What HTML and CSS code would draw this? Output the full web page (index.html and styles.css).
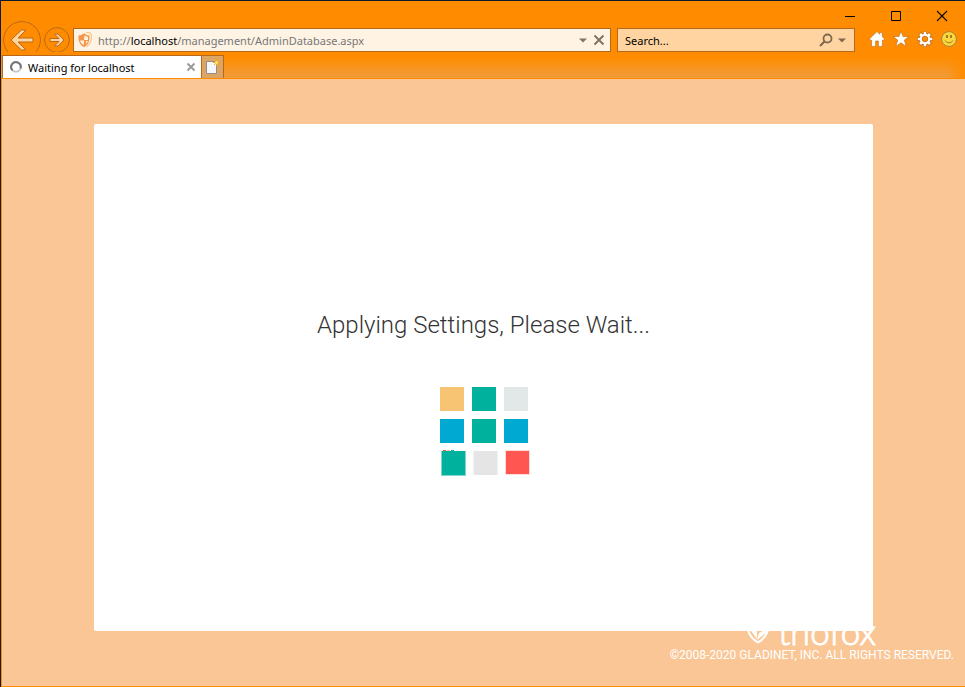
FILE: index.html
```html
<!DOCTYPE html>
<html lang="en">
<head>
<meta charset="utf-8">
<title>Waiting for localhost</title>
<link rel="stylesheet" href="styles.css">
</head>
<body>
<div class="window">
  <header class="chrome">
    <div class="titlebar">
      <button class="win" aria-label="Minimize"><svg width="12" height="12"><path d="M1 6.5h10" stroke="#000"/></svg></button>
      <button class="win" aria-label="Maximize"><svg width="12" height="12"><path d="M1.5 1.5h9v9h-9z" fill="none" stroke="#000"/></svg></button>
      <button class="win" aria-label="Close"><svg width="12" height="12"><path d="M1 1l10 10M11 1L1 11" stroke="#000" stroke-width="1.1"/></svg></button>
    </div>
    <div class="toolbar">
      <button class="nav back" aria-label="Back"><svg width="38" height="38"><circle cx="19" cy="19" r="18.4" fill="#ff8c00" stroke="#b86818"/><path d="M8 19L18.500 9h4.500l-8 8H30v4H15l8 8h-4.500z" fill="#ffd4a0" stroke="#b86818"/></svg></button>
      <button class="nav forward" aria-label="Forward"><svg width="26" height="26"><circle cx="13" cy="13" r="12.400" fill="#ff8c00" stroke="#b86818"/><path d="M20 13l-6-6h-3.500l4.500 4.500H6v3h9L10.500 19H14z" fill="#ffd4a0" stroke="#b86818"/></svg></button>
      <div class="box address">
        <svg width="16" height="16" viewBox="0 0 16 16"><path d="M9 .8c3-.8 5 .2 5.300 2.200.6 5-1.300 9-4.800 11.500" fill="none" stroke="#f9c48f" stroke-width="1.200"/><path d="M1.500 3.500C4 3.500 5.500 2.500 7 1.300c1.600 1.200 3 2 5.500 2.200C13 9 11 13 7 15.200 3 13 1 9 1.500 3.500z" fill="#f5964a"/><path d="M7.500 3.500l3.500 1.500v3H7zM3 8.500h4V13C5 12 3.500 10.500 3 8.500zM9 9h2l-2 3z" fill="#fff3e4"/></svg>
        <a class="url" href="#">http://<b>localhost</b>/management/AdminDatabase.aspx</a>
        <button class="tool" aria-label="Show addresses"><svg width="8" height="5"><path d="M0 .5h8l-4 4z" fill="#80746a"/></svg></button>
        <button class="tool" aria-label="Stop"><svg width="12" height="12"><path d="M1.500 1.500l9 9M10.500 1.500l-9 9" stroke="#80746a" stroke-width="2"/></svg></button>
      </div>
      <div class="box search">
        <input type="text" aria-label="Search" placeholder="Search...">
        <button class="tool" aria-label="Search"><svg width="14" height="14"><circle cx="8.500" cy="5.500" r="4" fill="none" stroke="#806850" stroke-width="1.800"/><path d="M5.500 8.500L1 13" stroke="#806850" stroke-width="2.200"/></svg></button>
        <button class="tool" aria-label="Search options"><svg width="8" height="5"><path d="M0 .5h8l-4 4z" fill="#806850"/></svg></button>
      </div>
      <div class="actions">
        <button aria-label="Home"><svg width="16" height="16"><path d="M8 .6L.4 8l1.500 1.600.7-.6v6.400h4V10h2.800v5.400h4V9l.7.6L15.600 8 13.300 5.800V1.600h-2.600v1.700z" fill="#fff" stroke="#b86818" stroke-width=".6"/></svg></button>
        <button aria-label="Favorites"><svg width="16" height="16"><path d="M8 0l2 5.500h5.900l-4.600 3.600 1.900 6.300L8 11.800l-5.200 3.600 1.900-6.300L.1 5.500H6z" fill="#fff" stroke="#b86818" stroke-width=".6"/></svg></button>
        <button aria-label="Tools"><svg width="16" height="16" viewBox="-8 -8 16 16"><g stroke="#b86818" stroke-width="4"><path d="M0-7.800V7.800M-7.800 0H7.800M-5.500-5.500l11 11M5.500-5.500l-11 11"/></g><circle r="5" fill="none" stroke="#b86818" stroke-width="2"/><g stroke="#fff" stroke-width="2.600"><path d="M0-7.300V7.300M-7.300 0H7.300M-5-5l10 10M5-5L-5 5"/></g><circle r="4" fill="#ff8c00" stroke="#fff" stroke-width="2.400"/><circle r="2.800" fill="#ff8c00" stroke="#b86818" stroke-width=".7"/></svg></button>
        <button aria-label="Send a smile"><svg width="16" height="16"><circle cx="8" cy="8" r="7.400" fill="#fbd63c" stroke="#a98438"/><path d="M6 4v3M10 4v3" stroke="#8a6a20" stroke-width="1.600"/><path d="M4 9.500c1.500 3 6.500 3 8 0" fill="none" stroke="#a17a20"/></svg></button>
      </div>
    </div>
    <nav class="tabs">
      <div class="tab">
        <svg width="12" height="12"><circle cx="6" cy="6" r="4.800" fill="none" stroke="#c8c8c8" stroke-width="2"/><path d="M2.600 9.400A4.800 4.800 0 1 1 10.500 7.500" fill="none" stroke="#777" stroke-width="2"/></svg>
        <span>Waiting for localhost</span>
        <button class="tool" aria-label="Close tab"><svg width="10" height="10"><path d="M1.500 1.500l7 7M8.500 1.500l-7 7" stroke="#999" stroke-width="1.900"/></svg></button>
      </div>
      <button class="newtab" aria-label="New tab"><svg width="16" height="16"><path d="M1.500 2.500h10v12h-10z" fill="#f4f7fc" stroke="#9a8b80"/><path d="M11.500 0v7M8 3.500h7M9 1l5 5M14 1L9 6" stroke="#f3a90f"/><circle cx="11.500" cy="3.500" r="1.500" fill="#ffe36e"/></svg></button>
    </nav>
  </header>
  <main class="page">
    <section class="card">
      <h1>Applying Settings, Please Wait...</h1>
      <svg class="loader" width="88" height="88" role="img" aria-label="Loading">
        <path d="M0 0h24v24H0z" fill="#f6c473"/><path d="M32 0h24v24H32zM32 32h24v24H32z" fill="#00b19d"/><path d="M64 0h24v24H64z" fill="#e1e8e7"/>
        <path d="M0 32h24v24H0zM64 32h24v24H64z" fill="#00a9d1"/>
        <path d="M1 64h25v25H1z" fill="#85d4cb"/><path d="M2 64h23v24H2z" fill="#00b19d"/>
        <path d="M33 64h25v24H33z" fill="#f1f1f1"/><path d="M34 64h23v24H34z" fill="#e5e5e5"/>
        <path d="M65 63h25v25H65z" fill="#ffdcdc"/><path d="M66 64h23v23H66z" fill="#ff5652"/>
        <path d="M3 63h3v1H3z" fill="#ff5652"/><path d="M7 63h3v1H7z" fill="#f6c473"/><path d="M11 63h3v1h-3z" fill="#00a9d1"/>
      </svg>
    </section>
    <footer>
      <div class="brand">
        <svg width="26" height="30" viewBox="0 0 26 30"><path d="M2 4c4 0 8-1 11-3 3 2 7 3 11 3 1 11-3 20-11 24.500C5 24 1 15 2 4z" fill="none" stroke="#fff" stroke-width="2"/><path d="M4 14l8 3.500V25zM12 26l2-7 9-5-2 5z" fill="#fff"/></svg>
        <span>triofox</span>
      </div>
      <p>©2008-2020 GLADINET, INC. ALL RIGHTS RESERVED.</p>
    </footer>
  </main>
</div>
</body>
</html>
```
FILE: styles.css
```css
* { box-sizing: border-box; }
body { margin: 0; font-family: "Noto Sans", "Open Sans", sans-serif; font-size: 11px; }
button { padding: 0; border: 0; background: none; display: flex; align-items: center; justify-content: center; }
svg { display: block; flex: none; }

.window { min-height: 100vh; display: flex; flex-direction: column; border-top: 1px solid #0c1c2c; border-left: 1px solid #0c1c2c; background: #ff8c00; }
.chrome { border-bottom: 1px solid #ff8c00; }
.titlebar { height: 27px; padding: 4px 0 0; display: flex; justify-content: flex-end; }
.win { width: 46px; height: 22px; }

.toolbar { height: 24px; padding-left: 2px; display: flex; align-items: center; }
.nav { flex: none; }
.back { width: 38px; margin-right: 3px; }
.forward { width: 26px; margin-right: 3px; }
.box { height: 24px; border: 1px solid #b86818; display: flex; align-items: center; }
.address { flex: 530 1 0; min-width: 0; background: #fff3e4; padding: 0 3px; }
.url { flex: 1; min-width: 0; margin-left: 5px; color: #777; text-decoration: none; white-space: nowrap; overflow: hidden; }
.url b { color: #000; font-weight: 400; }
.address .tool { width: 16px; height: 20px; }
.search { flex: 221 1 0; min-width: 0; margin-left: 6px; background: #ffd4a0; padding: 0 8px 0 7px; }
.search input { flex: 1; min-width: 0; padding: 0; border: 0; background: none; font: inherit; outline: 0; }
.search input::placeholder { color: #000; opacity: 1; }
.search .tool:last-child { margin-left: 5px; }
.actions { display: flex; gap: 8px; padding: 0 8px 3px 14px; }

.tabs { position: relative; height: 26px; padding: 3px 0 0 1px; display: flex; background: linear-gradient(90deg, transparent 98%, #ff8c00), linear-gradient(#ff8c00 20%, #f09c3c); }
.tab { width: 199px; padding: 0 5px 0 7px; display: flex; align-items: center; background: #fff; border-top: 1px solid #b86818; border-left: 1px solid #b86818; }
.tab span { flex: 1; margin-left: 6px; }
.newtab { width: 23px; border: 1px solid #b86818; border-bottom: 0; background: #dba566; }

.page { position: relative; flex: 1; display: flex; flex-direction: column; margin: 0 0 1px 1px; padding-top: 45px; background: #fac696; }
.card { position: relative; z-index: 1; flex: 1; width: 81%; max-width: 779px; margin: 0 auto; display: flex; flex-direction: column; align-items: center; justify-content: center; background: #fff; border-radius: 2px; padding-top: 28px; }
.loader { overflow: visible; }
h1 { margin: 0 0 46px; font: 300 24px/32px Roboto, sans-serif; color: #333; }
footer { position: relative; height: 55px; padding: 16px 11px 0; text-align: right; color: #fff; font: 400 12px/16px Roboto, sans-serif; }
footer p { margin: 0; }
.brand { position: absolute; right: 89px; bottom: 42px; display: flex; align-items: flex-end; gap: 7px; }
.brand span { font: 300 35px/25px Lato, sans-serif; -webkit-text-stroke: 1px #fff; }
```
